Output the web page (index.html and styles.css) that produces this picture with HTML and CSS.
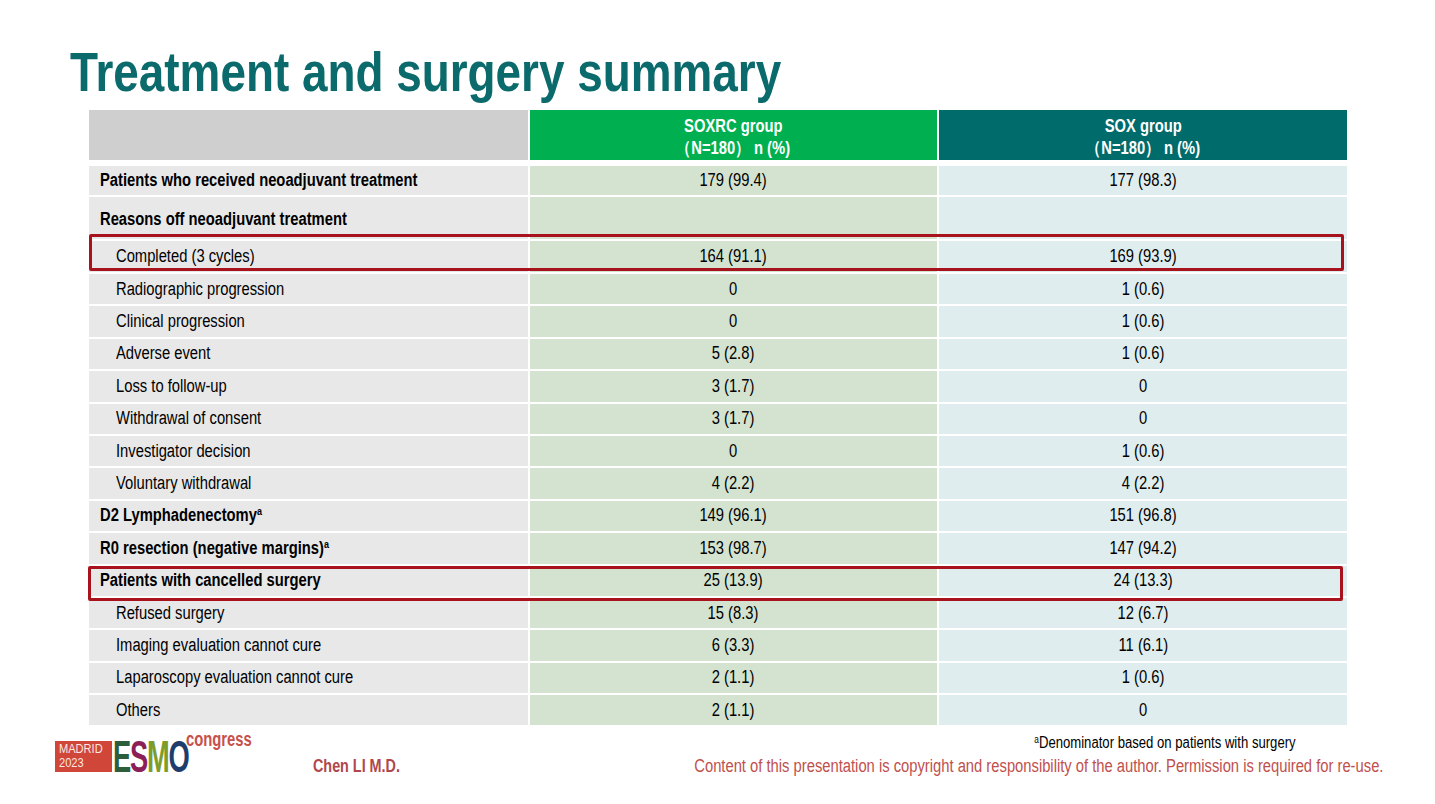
FILE: index.html
```html
<!DOCTYPE html>
<html>
<head>
<meta charset="utf-8">
<link rel="stylesheet" href="styles.css">
</head>
<body>
<div class="slide">
  <h1 class="title"><span class="t">Treatment and surgery summary</span></h1>
  <div class="table">
    <div class="row head">
      <div class="cell c1"></div>
      <div class="cell c2"><span class="t">SOXRC group<br>（N=180） n (%)</span></div>
      <div class="cell c3"><span class="t">SOX group<br>（N=180） n (%)</span></div>
    </div>
    <div class="row r-first"><div class="cell c1 b"><span class="t">Patients who received neoadjuvant treatment</span></div><div class="cell c2"><span class="t">179 (99.4)</span></div><div class="cell c3"><span class="t">177 (98.3)</span></div></div>
    <div class="row r-tall"><div class="cell c1 b"><span class="t">Reasons off neoadjuvant treatment</span></div><div class="cell c2"></div><div class="cell c3"></div></div>
    <div class="row r-mid"><div class="cell c1 i"><span class="t">Completed (3 cycles)</span></div><div class="cell c2"><span class="t">164 (91.1)</span></div><div class="cell c3"><span class="t">169 (93.9)</span></div></div>
    <div class="row"><div class="cell c1 i"><span class="t">Radiographic progression</span></div><div class="cell c2"><span class="t">0</span></div><div class="cell c3"><span class="t">1 (0.6)</span></div></div>
    <div class="row"><div class="cell c1 i"><span class="t">Clinical progression</span></div><div class="cell c2"><span class="t">0</span></div><div class="cell c3"><span class="t">1 (0.6)</span></div></div>
    <div class="row"><div class="cell c1 i"><span class="t">Adverse event</span></div><div class="cell c2"><span class="t">5 (2.8)</span></div><div class="cell c3"><span class="t">1 (0.6)</span></div></div>
    <div class="row"><div class="cell c1 i"><span class="t">Loss to follow-up</span></div><div class="cell c2"><span class="t">3 (1.7)</span></div><div class="cell c3"><span class="t">0</span></div></div>
    <div class="row"><div class="cell c1 i"><span class="t">Withdrawal of consent</span></div><div class="cell c2"><span class="t">3 (1.7)</span></div><div class="cell c3"><span class="t">0</span></div></div>
    <div class="row"><div class="cell c1 i"><span class="t">Investigator decision</span></div><div class="cell c2"><span class="t">0</span></div><div class="cell c3"><span class="t">1 (0.6)</span></div></div>
    <div class="row"><div class="cell c1 i"><span class="t">Voluntary withdrawal</span></div><div class="cell c2"><span class="t">4 (2.2)</span></div><div class="cell c3"><span class="t">4 (2.2)</span></div></div>
    <div class="row"><div class="cell c1 b"><span class="t">D2 Lymphadenectomy<sup>a</sup></span></div><div class="cell c2"><span class="t">149 (96.1)</span></div><div class="cell c3"><span class="t">151 (96.8)</span></div></div>
    <div class="row"><div class="cell c1 b"><span class="t">R0 resection (negative margins)<sup>a</sup></span></div><div class="cell c2"><span class="t">153 (98.7)</span></div><div class="cell c3"><span class="t">147 (94.2)</span></div></div>
    <div class="row"><div class="cell c1 b"><span class="t">Patients with cancelled surgery</span></div><div class="cell c2"><span class="t">25 (13.9)</span></div><div class="cell c3"><span class="t">24 (13.3)</span></div></div>
    <div class="row"><div class="cell c1 i"><span class="t">Refused surgery</span></div><div class="cell c2"><span class="t">15 (8.3)</span></div><div class="cell c3"><span class="t">12 (6.7)</span></div></div>
    <div class="row"><div class="cell c1 i"><span class="t">Imaging evaluation cannot cure</span></div><div class="cell c2"><span class="t">6 (3.3)</span></div><div class="cell c3"><span class="t">11 (6.1)</span></div></div>
    <div class="row"><div class="cell c1 i"><span class="t">Laparoscopy evaluation cannot cure</span></div><div class="cell c2"><span class="t">2 (1.1)</span></div><div class="cell c3"><span class="t">1 (0.6)</span></div></div>
    <div class="row"><div class="cell c1 i"><span class="t">Others</span></div><div class="cell c2"><span class="t">2 (1.1)</span></div><div class="cell c3"><span class="t">0</span></div></div>
    <div class="hl hl-1"></div>
    <div class="hl hl-2"></div>
  </div>
  <div class="footer">
    <div class="logo">
      <div class="madrid"><span class="t">MADRID</span><span class="t">2023</span></div>
      <div class="esmo"><span class="e">E</span><span class="s">S</span><span class="m">M</span><span class="o">O</span></div>
      <div class="congress">congress</div>
    </div>
    <div class="author"><span class="t">Chen LI M.D.</span></div>
    <div class="notes">
      <div class="footnote"><span class="t"><sup>a</sup>Denominator based on patients with surgery</span></div>
      <div class="copyright"><span class="t">Content of this presentation is copyright and responsibility of the author. Permission is required for re-use.</span></div>
    </div>
  </div>
</div>
</body>
</html>
```

FILE: styles.css
```css
html, body {
  margin: 0;
  padding: 0;
  background: #ffffff;
}
body {
  font-family: "Liberation Sans", Arial, sans-serif;
  color: #000;
}
.t {
  display: inline-block;
  transform: scaleX(0.82);
  transform-origin: left center;
  white-space: nowrap;
}
.slide {
  width: 1435px;
  height: 804px;
  position: relative;
  overflow: hidden;
  display: flex;
  flex-direction: column;
}
.title {
  margin: 44px 0 0 70px;
  font-size: 56px;
  line-height: 56px;
  height: 56px;
  font-weight: bold;
  color: #0b6a6c;
}
.title .t { transform: scaleX(0.819); }
.table {
  position: relative;
  margin: 10px 0 0 89px;
  width: 1258px;
  display: flex;
  flex-direction: column;
  gap: 2px;
}
.row {
  display: grid;
  grid-template-columns: 439px 407px 408px;
  column-gap: 2px;
  height: 30.4px;
}
.row.head {
  height: 50px;
  margin-bottom: 4px;
}
.row.r-first { height: 29px; }
.row.r-tall { height: 42px; }
.row.r-tall .cell.c1 { padding-top: 3px; box-sizing: border-box; }
.row.r-mid { height: 31px; }
.cell {
  display: flex;
  align-items: center;
  justify-content: center;
  font-size: 18px;
  white-space: nowrap;
}
.cell .t { transform-origin: center center; }
.cell.c1 .t { transform-origin: left center; }
.cell.c1 {
  background: #e8e8e8;
  justify-content: flex-start;
}
.cell.c2 { background: #d4e3d0; }
.cell.c3 { background: #e0edee; }
.cell.b { font-weight: bold; padding-left: 11px; }
.cell.i { padding-left: 27px; }
.cell sup {
  font-size: 11px;
  line-height: 0;
  vertical-align: 6px;
}
.head .cell {
  color: #fff;
  font-weight: bold;
  text-align: center;
  line-height: 22px;
}
.head .cell .t { padding-top: 3px; }
.head .c1 { background: #d0cfd0; }
.head .c2 { background: #00b050; }
.head .c3 { background: #006b6b; }
.hl {
  position: absolute;
  border: 3px solid #a8121c;
  border-radius: 2px;
  box-sizing: border-box;
  pointer-events: none;
}
.hl-1 { left: 0; top: 124px; width: 1255px; height: 37px; }
.hl-2 { left: -1px; top: 456px; width: 1255px; height: 35px; }
.footer {
  display: flex;
  align-items: flex-start;
  margin-top: 6px;
  position: relative;
  height: 66px;
}
.logo {
  position: relative;
  margin-left: 55px;
  width: 200px;
  height: 44px;
  display: flex;
  align-items: flex-start;
  padding-top: 10px;
}
.madrid {
  width: 57px;
  height: 31px;
  background: #d0473a;
  color: #fbe6e2;
  font-size: 13.5px;
  line-height: 14px;
  padding: 1px 0 0 4px;
  box-sizing: border-box;
  display: flex;
  flex-direction: column;
  align-items: flex-start;
}
.esmo {
  height: 31px;
  margin-left: 1px;
  font-weight: bold;
  font-size: 44px;
  line-height: 31px;
  letter-spacing: -2px;
  transform: scaleX(0.62);
  transform-origin: left center;
  white-space: nowrap;
}
.esmo .e { color: #2c5e3c; }
.esmo .s { color: #8c1f57; }
.esmo .m { color: #7d9c2c; }
.esmo .o { color: #1e3c6c; }
.congress {
  position: absolute;
  left: 131px;
  top: -2px;
  color: #c8504a;
  font-weight: bold;
  font-size: 20px;
  line-height: 20px;
  transform: scaleX(0.74);
  transform-origin: left center;
}
.author {
  margin-left: 58px;
  margin-top: 25px;
  font-weight: bold;
  font-size: 17.5px;
  line-height: 20px;
  color: #b0474b;
}
.notes {
  margin-left: auto;
  margin-right: 52px;
  display: flex;
  flex-direction: column;
  align-items: flex-end;
  padding-top: 3px;
}
.notes .t { transform-origin: right center; }
.footnote {
  font-size: 16px;
  margin-right: 87px;
  line-height: 18px;
}
.footnote sup {
  font-size: 10px;
  vertical-align: 5px;
  line-height: 0;
}
.copyright {
  margin-top: 4px;
  font-size: 18px;
  color: #c0504d;
  line-height: 20px;
}
```
